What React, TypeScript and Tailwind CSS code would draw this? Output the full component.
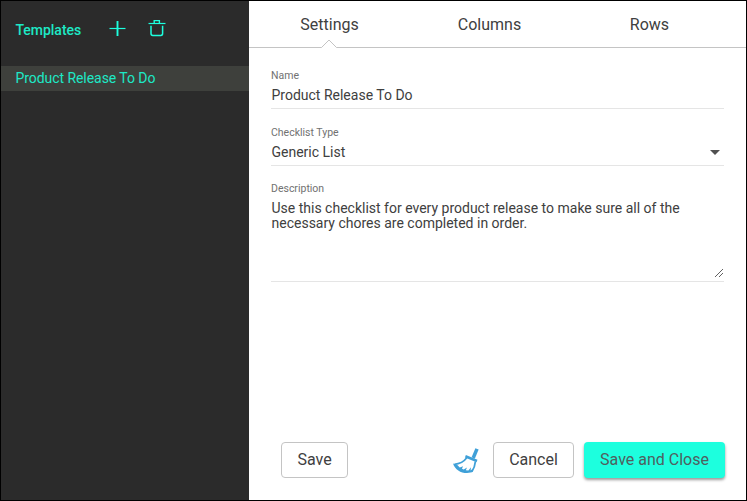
import React from "react";

const tabs = ["Settings", "Columns", "Rows"];

function PlusIcon() {
  return (
    <svg className="ml-7 h-4 w-[17px]" viewBox="0 0 17 16" fill="none" stroke="#1dffde">
      <path d="M0.5 7.5H16.5" strokeWidth="1.2" />
      <path d="M8.5 0V15" strokeWidth="1.9" />
    </svg>
  );
}

function TrashIcon() {
  return (
    <svg className="ml-[22px] h-[17px] w-[18px]" viewBox="0 0 18 17" fill="none" stroke="#1dffde">
      <path d="M0.5 3.5H17.5" strokeWidth="1.2" />
      <path d="M6.2 3.5V0.6H11.4V3.5" strokeWidth="1.4" />
      <path d="M3 5.8V13.6Q3 15.5 4.8 15.5H12.8Q14.6 15.5 14.6 13.6V5.8" strokeWidth="1.5" />
    </svg>
  );
}

function BroomIcon() {
  return (
    <svg className="mr-[14px] mt-1 h-7 w-7" viewBox="0 0 28 28" fill="none" stroke="#3fa0d8">
      <path d="M26 0.8L22.2 10" strokeWidth="3.5" />
      <path d="M14.4 8.2L26 13" strokeWidth="2.6" />
      <path d="M15.8 9.8C12.8 13.8 8.5 16 3.4 16.3" strokeWidth="1.7" />
      <path d="M24.4 13.5C24 17 23 20.5 21.2 23" strokeWidth="1.8" />
      <path d="M2 15.4C4 21.5 9.5 25 16 25C18.5 25 20.8 24.5 22 23.8L21.8 20.7L19.6 22.6L20 19.2L17.4 22.4L14.8 22.3L16 19.4L12.7 21.5L11 20.8L12 18.2L8.8 19.6L6.3 17Z" fill="#3fa0d8" stroke="none" />
    </svg>
  );
}

export default function App() {
  return (
    <div className="flex h-[501px] w-[747px] border border-black bg-white font-['Roboto',sans-serif] text-[#404040]">
      <aside className="w-[248px] shrink-0 bg-[#2b2b2b] text-sm text-[#1de9c6]">
        <header className="flex h-[65px] items-start pl-[14.5px] pt-5">
          <h1 className="mt-[-1px] w-[65.5px] font-medium leading-5 tracking-[-0.03px]">Templates</h1>
          <PlusIcon />
          <div className="-mt-px"><TrashIcon /></div>
        </header>
        <div className="h-[25px] bg-[#3e403c] pl-[14.5px] leading-6 tracking-[-0.06px]">Product Release To Do</div>
      </aside>
      <main className="flex min-w-0 flex-1 flex-col">
        <nav className="flex h-[47px] shrink-0 border-b border-[#c4c4c4]">
          {tabs.map((tab, i) => (
            <button key={tab} className="relative w-40 pl-px text-base leading-[48px]">
              {tab}
              {i === 0 && (
                <svg className="absolute -bottom-px left-[72px] h-[9px] w-4" viewBox="0 0 16 9">
                  <path d="M0.5 8.5L8 1L15.5 8.5V9H0.5Z" fill="white" />
                  <path d="M0.5 8.5L8 1L15.5 8.5" fill="none" stroke="#c4c4c4" />
                </svg>
              )}
            </button>
          ))}
        </nav>
        <section className="ml-[22px] w-[453px] text-sm">
          <div className="h-[61px] border-b border-[#e5e5e5] pt-[21px]">
            <div className="text-[10.5px] leading-[14px] text-[#717171]">Name</div>
            <div className="pl-[0.5px] pt-[3px] leading-[18px]">Product Release To Do</div>
          </div>
          <div className="h-[57px] border-b border-[#e5e5e5] pt-[17px]">
            <div className="text-[10.5px] leading-[14px] text-[#717171]">Checklist Type</div>
            <div className="flex items-center justify-between pl-[0.5px] pr-1 pt-[3px] leading-[18px]">
              Generic List
              <svg className="h-[5px] w-[10px]" viewBox="0 0 10 5"><path d="M0 0H10L5 5Z" fill="#505050" /></svg>
            </div>
          </div>
          <div className="flex h-[116px] flex-col border-b border-[#e5e5e5] pt-4">
            <div className="text-[10.5px] leading-[14px] text-[#717171]">Description</div>
            <p className="w-[430px] pl-[0.5px] pt-[5px] leading-[15px]">
              Use this checklist for every product release to make sure all of the necessary chores are completed in order.
            </p>
            <svg className="mb-1 ml-auto mr-px mt-auto h-2 w-2" viewBox="0 0 8 8" stroke="#505050"><path d="M0 8L8 0M4 8L8 4" strokeWidth="0.9" /></svg>
          </div>
        </section>
        <footer className="mb-[22px] ml-8 mr-[21px] mt-auto flex h-9 items-center text-base">
          <button className="h-9 w-[67px] rounded border border-[#c4c4c4]">Save</button>
          <div className="ml-auto"><BroomIcon /></div>
          <button className="h-9 w-[81px] rounded border border-[#c4c4c4]">Cancel</button>
          <button className="ml-[10px] h-9 w-[141px] rounded bg-[#1dffde] text-[#50605e] shadow-[0_2px_3px_rgba(0,0,0,0.4)]">Save and Close</button>
        </footer>
      </main>
    </div>
  );
}
